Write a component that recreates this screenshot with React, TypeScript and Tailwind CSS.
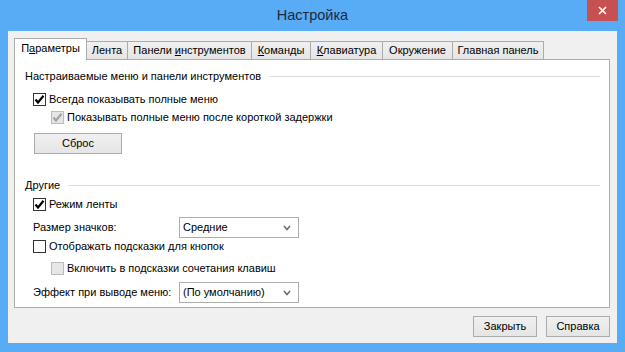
import React from "react";

const font = "font-['Liberation_Sans',Arial,sans-serif]";

const Check: React.FC<{ checked?: boolean; disabled?: boolean }> = ({ checked, disabled }) => (
  <span
    className={
      "flex h-[13px] w-[13px] shrink-0 items-center justify-center border " +
      (disabled ? "border-[#bcbcbc] bg-[#e6e6e6]" : "border-[#333333] bg-white")
    }
  >
    {checked && (
      <svg width="11" height="11" viewBox="0 0 11 11">
        <polyline
          points="1.5,5.5 4,8.5 9.5,1.8"
          fill="none"
          stroke={disabled ? "#a3a3a3" : "#000"}
          strokeWidth="2.2"
        />
      </svg>
    )}
  </span>
);

const CheckRow: React.FC<{ label: string; checked?: boolean; disabled?: boolean; indent?: boolean; mt: string }> = ({
  label,
  checked,
  disabled,
  indent,
  mt,
}) => (
  <div className={`flex h-[15px] items-center gap-[3px] ${indent ? "pl-[26px]" : "pl-[8px]"} ${mt}`}>
    <Check checked={checked} disabled={disabled} />
    <span className="whitespace-nowrap leading-none">{label}</span>
  </div>
);

const GroupHeader: React.FC<{ label: string; mt: string }> = ({ label, mt }) => (
  <div className={`flex h-[16px] items-center gap-[8px] pr-[9px] ${mt}`}>
    <span className="whitespace-nowrap leading-none">{label}</span>
    <div className="h-px flex-1 bg-[#dcdcdc]" />
  </div>
);

const Select: React.FC<{ value: string }> = ({ value }) => (
  <div className="flex h-[21px] w-[120px] items-center justify-between border border-[#acacac] bg-white pl-[3px] pr-[7px]">
    <span className="whitespace-nowrap leading-none">{value}</span>
    <svg width="8" height="6" viewBox="0 0 8 6">
      <polyline points="1,1 4,4.5 7,1" fill="none" stroke="#6d6d6d" strokeWidth="1.6" />
    </svg>
  </div>
);

const SelectRow: React.FC<{ label: string; value: string; mt: string }> = ({ label, value, mt }) => (
  <div className={`flex h-[21px] items-center pl-[8px] ${mt}`}>
    <span className="w-[146px] shrink-0 whitespace-nowrap leading-none">{label}</span>
    <Select value={value} />
  </div>
);

const Button: React.FC<{ children: React.ReactNode; className?: string }> = ({ children, className }) => (
  <div
    className={
      "flex h-[21px] items-center justify-center border border-[#acacac] bg-gradient-to-b from-[#f0f0f0] to-[#e5e5e5] leading-none " +
      (className ?? "")
    }
  >
    {children}
  </div>
);

const tabs: { label: React.ReactNode; w: string }[] = [
  { label: "Лента", w: "w-[41px]" },
  { label: <span>Панели <u>и</u>нструментов</span>, w: "w-[124px]" },
  { label: <span><u>К</u>оманды</span>, w: "w-[59px]" },
  { label: <span><u>К</u>лавиатура</span>, w: "w-[72px]" },
  { label: "Окружение", w: "w-[70px]" },
  { label: "Главная панель", w: "w-[91px]" },
];

export default function App() {
  return (
    <div className={`flex h-[352px] w-[625px] flex-col bg-[#58abf5] text-[11px] text-black ${font}`}>
      {/* title bar */}
      <div className="relative flex h-[31px] shrink-0 items-center justify-center">
        <span className="text-[14.5px] leading-none text-[#1c2a3c]">Настройка</span>
        <div className="absolute right-[7px] top-0 flex h-[21px] w-[31px] items-center justify-center bg-[#c75050]">
          <svg width="9" height="9" viewBox="0 0 9 9">
            <path d="M1 1 L8 8 M8 1 L1 8" stroke="#fff" strokeWidth="1.7" />
          </svg>
        </div>
      </div>

      {/* client area */}
      <div className="mx-[8px] flex h-[312px] flex-col bg-[#f0f0f0] pl-[6px] pr-[7px] pt-[7px]">
        {/* tabs */}
        <div className="flex h-[21px] items-end">
          <div className="relative z-10 -mb-px flex h-[22px] w-[73px] items-center justify-center whitespace-nowrap border border-b-0 border-[#acacac] bg-white pb-[2px] leading-none">
            <span>П<u>а</u>раметры</span>
          </div>
          {tabs.map((t, i) => (
            <div
              key={i}
              className={`flex h-[18px] items-center justify-center whitespace-nowrap border-r border-t border-[#acacac] bg-gradient-to-b from-[#f0f0f0] to-[#e5e5e5] leading-none ${t.w}`}
            >
              {t.label}
            </div>
          ))}
        </div>

        {/* pane */}
        <div className="flex h-[249px] flex-col border border-[#acacac] bg-white pl-[10px]">
          <GroupHeader label="Настраиваемые меню и панели инструментов" mt="mt-[8px]" />
          <CheckRow label="Всегда показывать полные меню" checked mt="mt-[8px]" />
          <CheckRow label="Показывать полные меню после короткой задержки" checked disabled indent mt="mt-[3px]" />
          <div className="mt-[8px] pl-[9px]">
            <Button className="h-[20px] w-[88px]">Сброс</Button>
          </div>
          <GroupHeader label="Другие" mt="mt-[23px]" />
          <CheckRow label="Режим ленты" checked mt="mt-[4px]" />
          <SelectRow label="Размер значков:" value="Средние" mt="mt-[5px]" />
          <CheckRow label="Отображать подсказки для кнопок" mt="mt-[1px]" />
          <CheckRow label="Включить в подсказки сочетания клавиш" disabled indent mt="mt-[7px]" />
          <SelectRow label="Эффект при выводе меню:" value="(По умолчанию)" mt="mt-[6px]" />
        </div>

        {/* footer buttons */}
        <div className="mt-[8px] flex justify-end gap-[9px]">
          <Button className="w-[64px]">Закрыть</Button>
          <Button className="w-[64px]">Справка</Button>
        </div>
      </div>
    </div>
  );
}
